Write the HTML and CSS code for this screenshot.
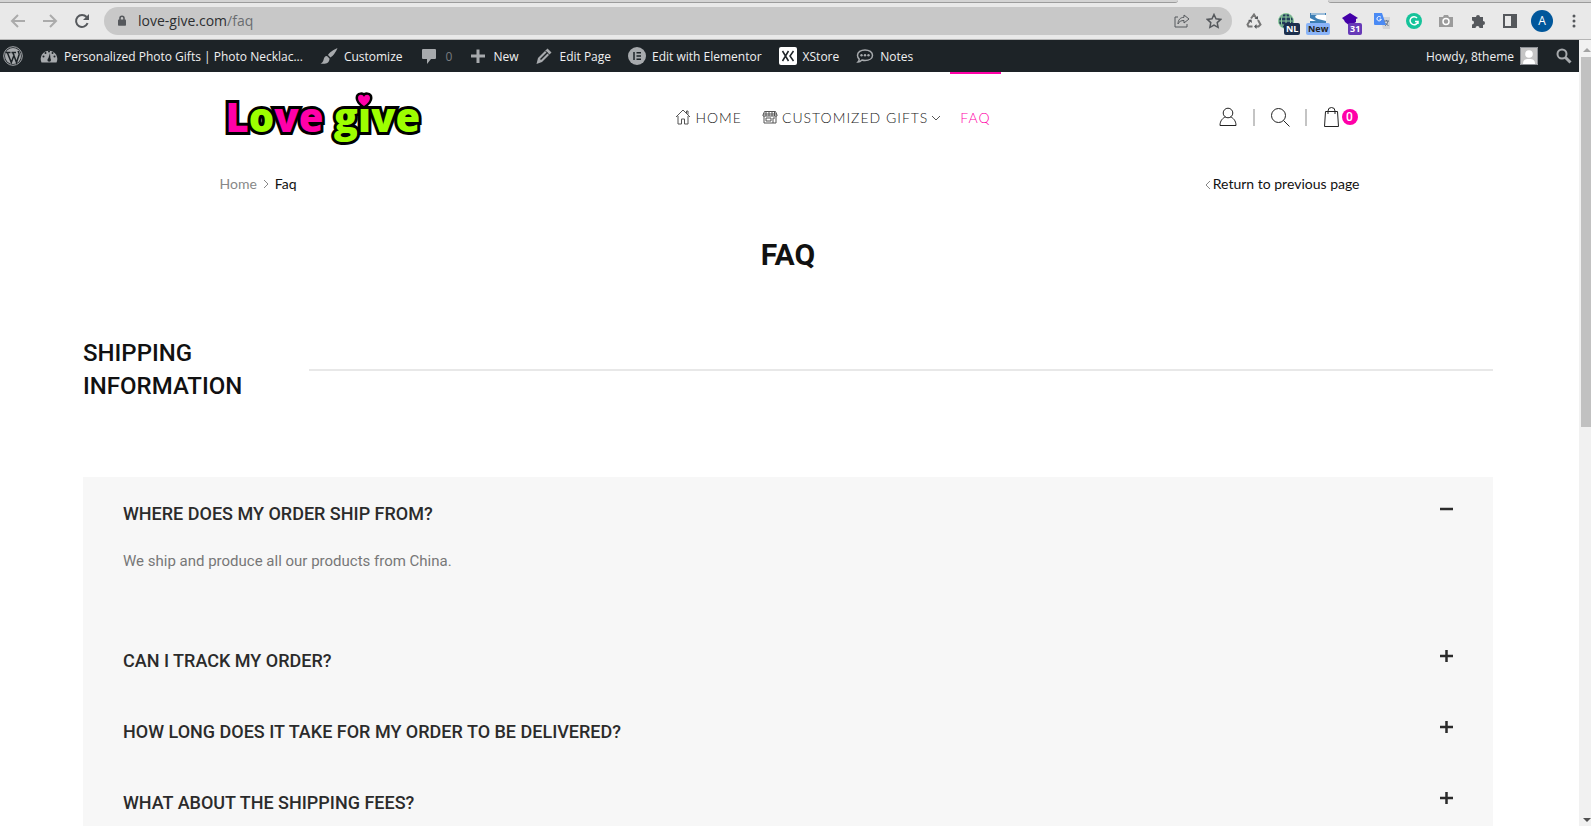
FILE: index.html
```
<!DOCTYPE html>
<html lang="en">
<head>
    <meta charset="UTF-8">
    <meta name="viewport" content="width=device-width, initial-scale=1.0">
    <title>Faq</title>
    <link rel="stylesheet" href="styles.css">
</head>
<body>
    <!-- Browser toolbar -->
    <div class="tab-strip"><span class="tab-edge"></span><span class="tab-active"></span><span class="tab-rest"></span></div>
    <div class="toolbar">
        <button class="tool" aria-label="Back"><svg class="i16 faded" viewBox="0 0 16 16"><path d="M15 8H2M8 2L2 8l6 6"/></svg></button>
        <button class="tool" aria-label="Forward"><svg class="i16 faded" viewBox="0 0 16 16"><path d="M1 8h13M8 2l6 6-6 6"/></svg></button>
        <button class="tool" aria-label="Reload"><svg class="i16" viewBox="0 0 16 16"><path d="M13.6 10.2A6 6 0 1 1 12.6 4" /><path class="solid" d="M15 1v6H9z"/></svg></button>
        <div class="address">
            <svg class="lock" viewBox="0 0 10 14"><rect class="solid" x="0" y="5" width="10" height="8" rx="1"/><path d="M2.500 6V3.500a2.500 2.500 0 0 1 5 0V6"/></svg>
            <a class="url" href="#">love-give.com<span>/faq</span></a>
            <button class="tool" aria-label="Share"><svg class="i16 thin" viewBox="0 0 16 16"><path d="M4 4H1v10h12v-3"/><path d="M10 2l5 4-5 4V7.500C7 7.500 5 8.500 4 11c0-4 2-6.500 6-6.700z"/></svg></button>
            <button class="tool" aria-label="Bookmark"><svg class="i16 star" viewBox="0 0 16 16"><path d="M8 1.500l2 4.300 4.700.6-3.500 3.200.9 4.700L8 12l-4.100 2.300.9-4.700-3.500-3.200 4.700-.6z"/></svg></button>
        </div>
        <div class="extensions">
            <button class="tool" aria-label="Recycle"><svg class="i16 recycle" viewBox="0 0 16 16"><path d="M5 5.500L8 1.500l2.500 4M12 7l2.500 4.500-2 2H9.500M6.500 13.500h-4l-1-2L4 7.500"/><path class="solid" d="M8.500 5.500l3.500 1V3zM10.500 11v5L8 13.500zM2 7l3.500-.5.5 3.500z"/></svg></button>
            <button class="tool" aria-label="Language"><svg class="i16 globe" viewBox="0 0 16 16"><circle cx="8" cy="8" r="7.500"/><path d="M8 1v14M1 8h14M2 4h12M2 12h12M4.500 1.500c-1.500 4-1.500 9 0 13M11.500 1.500c1.500 4 1.500 9 0 13"/></svg><span class="badge navy">NL</span></button>
            <button class="tool" aria-label="Screenshots"><svg class="i16" viewBox="0 0 16 16"><path d="M0 0h16v16H0z" fill="#fff" stroke="none"/><path d="M0 0h16v2H7c-3 1-2 3 1 4l8 2v8H0V8h6L0 5z" fill="#3e7fb5" stroke="none"/><path d="M1 1h14" stroke="#fff" stroke-width="1"/></svg><span class="badge blue">New</span></button>
            <button class="tool" aria-label="Layers"><svg class="i16" viewBox="0 0 16 16"><path d="M8 0l8 5-2 1v3l-6 4-5-4-1-2-2-2z" fill="#4400a8" stroke="none"/></svg><span class="badge purple">31</span></button>
            <button class="tool" aria-label="Translate"><svg class="i16" viewBox="0 0 16 16"><path d="M6 4h10v12H9z" fill="#d2d4d7" stroke="none"/><path d="M0 0h8l4 12H1a1 1 0 0 1-1-1z" fill="#4a8af4" stroke="none"/><path d="M7 4.500a2.200 2.200 0 1 0 .3 1.700H5.500" stroke="#fff" stroke-width="1"/><path d="M10 8h5M12.500 7v1M14 8c-.5 3-2 4-3 5M11.500 10l3 3" stroke="#64748b" stroke-width="1"/></svg></button>
            <button class="tool" aria-label="Grammar"><svg class="i16" viewBox="0 0 16 16"><circle cx="8" cy="8" r="8" fill="#15c39a" stroke="none"/><path d="M11 5a4 4 0 1 0 1 3.500H9M12 8.500V11" stroke="#fff" stroke-width="1.500"/></svg></button>
            <button class="tool" aria-label="Camera"><svg class="i16" viewBox="0 0 16 16"><path d="M1 4h4l1-2h4l1 2h4v10H1z" fill="#9b9b9b" stroke="none"/><circle cx="8" cy="8.500" r="3" stroke="#fff" stroke-width="1.500"/></svg></button>
            <button class="tool" aria-label="Extensions"><svg class="i16" viewBox="0 0 16 16"><path class="solid" d="M2 4h4a2 2 0 1 1 4 0h3v4a2 2 0 1 1 0 4v3H9.500a2 2 0 1 0-4 0H2v-3.500a2 2 0 1 0 0-4z"/></svg></button>
            <button class="tool" aria-label="Side panel"><svg class="i16" viewBox="0 0 16 16"><rect x="2" y="2" width="12" height="12"/><path class="solid" d="M9 1h6v14H9z"/></svg></button>
            <button class="tool" aria-label="Profile"><span class="profile">A</span></button>
            <button class="tool" aria-label="Menu"><svg class="i16" viewBox="0 0 16 16"><circle class="solid" cx="8" cy="3" r="1.500"/><circle class="solid" cx="8" cy="8" r="1.500"/><circle class="solid" cx="8" cy="13" r="1.500"/></svg></button>
        </div>
    </div>

    <div class="viewport">
        <div class="page">
            <!-- WordPress admin bar -->
            <div class="admin-bar">
                <a href="#" aria-label="WordPress"><svg class="i20" viewBox="0 0 20 20"><circle cx="10" cy="10" r="9.300" fill="none" stroke="#a7aaad" stroke-width="1"/><circle cx="10" cy="10" r="8"/><path d="M3 6.500h4.500M8.500 6.500H13M4.500 7l3.800 9.500 3-8M10 7l3.500 9.500L16 9c.6-2-.8-2.500-.8-4" fill="none" stroke="#1d2327" stroke-width="1.500"/></svg></a>
                <a href="#" class="site"><svg class="i18" viewBox="0 0 18 18"><path d="M1.500 15.500a8.300 8.300 0 1 1 15 0z"/><path d="M8 12.500L10 6l.5 6.500z" fill="#1d2327"/><g fill="#1d2327"><circle cx="9" cy="4.500" r="1"/><circle cx="5.500" cy="6" r="1"/><circle cx="12.500" cy="6" r="1"/><circle cx="3.500" cy="9.500" r="1"/><circle cx="14.500" cy="9.500" r="1"/><circle cx="9.200" cy="13" r="1.800"/></g></svg>Personalized Photo Gifts | Photo Necklac...</a>
                <a href="#"><svg class="i18" viewBox="0 0 18 18"><path d="M17.500 1c-4 1.500-8 4.500-9.500 7l2.500 2.500C13 9 16 5 17.500 1zM7 9c-2.500 0-3 2-3.500 4-.5 2-1.500 3-3 3.500 4 .8 9 .5 9-5z"/></svg>Customize</a>
                <a href="#" class="muted"><svg class="i18" viewBox="0 0 18 18"><path d="M3 2h12a1 1 0 0 1 1 1v8a1 1 0 0 1-1 1h-4l-4 5v-5H3a1 1 0 0 1-1-1V3a1 1 0 0 1 1-1z"/></svg>0</a>
                <a href="#"><svg class="i18" viewBox="0 0 18 18"><path d="M7.500 2.500h3v5h5.500v3h-5.500v5.500h-3v-5.500H2v-3h5.500z"/></svg>New</a>
                <a href="#"><svg class="i18" viewBox="0 0 18 18"><path d="M12.500 1.500l4 4L7 15l-5.500 2L3 11z"/><path d="M5.500 12.500l7-7" stroke="#1d2327" stroke-width="1.500" fill="none"/><path d="M10.500 4l4 4" stroke="#1d2327" fill="none"/></svg>Edit Page</a>
                <a href="#"><svg class="i18" viewBox="0 0 18 18"><circle cx="9" cy="9" r="9"/><path d="M6 5v8M8.500 5.700H13M8.500 9H13M8.500 12.300H13" stroke="#1d2327" stroke-width="1.500" fill="none"/></svg>Edit with Elementor</a>
                <a href="#"><svg class="i18" viewBox="0 0 18 18"><rect width="18" height="18" rx="2" fill="#fff"/><path d="M3.500 4l6 10M9.500 4l-6 10M14.500 4l-3.500 5 3.500 5" stroke="#1d2327" stroke-width="1.500" fill="none"/></svg>XStore</a>
                <a href="#"><svg class="i18" viewBox="0 0 18 18"><path d="M9 3c4.200 0 7.500 2.200 7.500 5.200S13.500 13.500 9 13.500c-1 0-2-.2-3-.5-1 1-2.500 2-4 2 1-1 1.300-2 1.200-3C2.200 11 1.500 9.700 1.500 8.200 1.500 5.200 4.800 3 9 3z" fill="none" stroke="#a7aaad" stroke-width="1.500"/><circle cx="5.500" cy="8.200" r="1.200"/><circle cx="9" cy="8.200" r="1.200"/><circle cx="12.500" cy="8.200" r="1.200"/></svg>Notes</a>
                <a href="#" class="howdy">Howdy, 8theme<svg class="i18" viewBox="0 0 18 18"><rect width="18" height="18" fill="#c5c5c5"/><path d="M.5.5h17v17H.5z" fill="none" stroke="#8c8f94"/><circle cx="9" cy="7" r="3.800" fill="#fff"/><path d="M3 17c0-4 2-5 6-5s6 1 6 5z" fill="#fff"/></svg></a>
                <button class="admin-search" aria-label="Search"><svg class="i18" viewBox="0 0 18 18"><circle cx="7" cy="7" r="4.500" fill="none" stroke="#a7aaad" stroke-width="2"/><path d="M10.500 10.500l5 5" stroke="#a7aaad" stroke-width="3"/></svg></button>
            </div>

            <header class="header container">
                <a class="logo" href="#" aria-label="Love give">
                    <span class="pink">L</span><span class="lime">o</span><span class="pink">ve</span>
                    <span class="lime">g</span><span class="lime dotless">ı<svg class="heart" viewBox="0 0 20 18"><path d="M10 15c-4-3-6-5-6-8 0-4 5-4 6-1 1-3 6-3 6 1 0 3-2 5-6 8z"/></svg></span><span class="lime">ve</span>
                </a>
                <nav class="menu">
                    <a href="#"><svg class="i16" viewBox="0 0 16 16"><path d="M1 8l7-7 7 7M3 7v8h3.500v-5h3v5H13V7M11.500 4V2h1.500v3.500"/></svg>HOME</a>
                    <a href="#"><svg class="i16" viewBox="0 0 16 16"><path d="M2.500 2.500h11L15 6v1H1V6zM2 7v7h12V7M1 5h14M4 3v4M7 3v4M10 3v4M12.500 3v4M4 9h5v3H4zM11 14V9h2"/></svg>CUSTOMIZED GIFTS<svg class="chevron" viewBox="0 0 8 8"><path d="M0 3l4 4 4-4"/></svg></a>
                    <a href="#" class="active">FAQ</a>
                </nav>
                <div class="actions">
                    <a href="#" aria-label="Account"><svg class="i20" viewBox="0 0 20 20"><circle cx="10" cy="6" r="4.800"/><path d="M7.500 10C5 10.800 2 13.500 2 18.500h16c0-5-3-7.700-5.500-8.500"/></svg></a>
                    <span class="separator"></span>
                    <button aria-label="Search"><svg class="i20" viewBox="0 0 20 20"><circle cx="8.500" cy="8.500" r="7"/><path d="M13.500 13.500l6 6"/></svg></button>
                    <span class="separator"></span>
                    <a href="#" class="cart" aria-label="Cart"><svg class="i20" viewBox="0 0 20 20"><path d="M3.500 4.500h12l1 15h-14zM6 7V4a3.500 3.500 0 0 1 7 0v3"/></svg><span class="count">0</span></a>
                </div>
            </header>

            <div class="breadcrumbs container">
                <div class="trail"><a href="#">Home</a><svg class="chevron" viewBox="0 0 8 8"><path d="M2 0l4 4-4 4"/></svg><span>Faq</span></div>
                <a class="return" href="#"><svg class="chevron" viewBox="0 0 8 8"><path d="M5 0L1 4l4 4"/></svg>Return to previous page</a>
            </div>

            <main class="content">
                <h1>FAQ</h1>
                <div class="section-title">
                    <h2>SHIPPING INFORMATION</h2>
                    <hr>
                </div>
                <div class="accordion">
                    <h3><button aria-expanded="true">WHERE DOES MY ORDER SHIP FROM?<svg class="sign" viewBox="0 0 14 14"><path d="M1 7h13"/></svg></button></h3>
                    <div class="answer"><p>We ship and produce all our products from China.</p></div>
                    <h3><button aria-expanded="false">CAN I TRACK MY ORDER?<svg class="sign" viewBox="0 0 14 14"><path d="M1 7h13M7.500 1v12"/></svg></button></h3>
                    <h3><button aria-expanded="false">HOW LONG DOES IT TAKE FOR MY ORDER TO BE DELIVERED?<svg class="sign" viewBox="0 0 14 14"><path d="M1 7h13M7.500 1v12"/></svg></button></h3>
                    <h3><button aria-expanded="false">WHAT ABOUT THE SHIPPING FEES?<svg class="sign" viewBox="0 0 14 14"><path d="M1 7h13M7.500 1v12"/></svg></button></h3>
                </div>
            </main>
        </div>
        <div class="scrollbar">
            <svg viewBox="0 0 8 4"><path d="M0 4l4-4 4 4z" fill="#a3a3a3"/></svg>
            <div class="track"><div class="thumb"></div></div>
            <svg viewBox="0 0 8 4"><path d="M0 0l4 4 4-4z" fill="#505050"/></svg>
        </div>
    </div>
</body>
</html>
```
FILE: styles.css
```
* {
    box-sizing: border-box;
}

body {
    margin: 0;
    height: 100vh;
    display: flex;
    flex-direction: column;
    overflow: hidden;
    background: #fff;
    color: #111;
    font-family: Roboto, sans-serif;
}

a {
    color: inherit;
    text-decoration: none;
}

button {
    border: none;
    padding: 0;
    background: none;
    color: inherit;
    font: inherit;
    cursor: pointer;
}

svg {
    flex: none;
}

.i16 {
    width: 16px;
    height: 16px;
}

.i18 {
    width: 18px;
    height: 18px;
}

.i20 {
    width: 20px;
    height: 20px;
}

/* Browser toolbar */
.tab-strip {
    flex: none;
    display: flex;
    height: 3px;
    background: #e9e9e9;
}

.tab-edge {
    flex: 1;
    background: #d4d4d4;
    border-bottom: 1px solid #9c9c9c;
    border-bottom-right-radius: 3px;
}

.tab-active {
    width: 150px;
}

.tab-rest {
    width: 263px;
    background: #d4d4d4;
    border-bottom: 1px solid #9c9c9c;
    border-bottom-left-radius: 3px;
}

.toolbar {
    flex: none;
    display: flex;
    align-items: center;
    height: 37px;
    padding: 0 1px 0 2px;
    background: #e9e9e9;
    border-bottom: 1px solid #b5b5b5;
    font-family: "Open Sans", sans-serif;
}

.tool {
    position: relative;
    width: 32px;
    height: 28px;
    display: flex;
    align-items: center;
    justify-content: center;
}

.tool svg {
    fill: none;
    stroke: #55585c;
    stroke-width: 2;
}

.tool .faded {
    stroke: #ababab;
}

.tool .thin {
    stroke-width: 1;
}

.tool .star {
    stroke-width: 1.5;
}

.tool .recycle {
    stroke: #777;
}

.tool .globe {
    fill: #23395b;
    stroke: #8fd19e;
    stroke-width: 1;
}

.solid {
    fill: #55585c;
    stroke: none;
}

.address {
    flex: 1;
    display: flex;
    align-items: center;
    height: 28px;
    margin-left: 6px;
    padding-left: 14px;
    padding-right: 2px;
    border-radius: 14px;
    background: #c8c8c8;
}

.lock {
    width: 8px;
    height: 14px;
    fill: none;
    stroke: #55585c;
    stroke-width: 2;
}

.url {
    flex: 1;
    margin-left: 12px;
    font-size: 14px;
    line-height: 18px;
    color: #2d2f31;
}

.url span {
    color: #6a6d70;
}

.extensions {
    display: flex;
    margin-left: 6px;
}

.badge {
    position: absolute;
    left: 14px;
    bottom: 0;
    padding: 0 2px;
    border-radius: 2px;
    color: #fff;
    font-size: 9px;
    font-weight: 700;
    line-height: 12px;
}

.navy {
    background: #1c2f4d;
}

.blue {
    left: 4px;
    background: #8ab4f8;
    color: #222;
}

.purple {
    background: #673ab7;
}

.profile {
    width: 22px;
    height: 22px;
    border-radius: 50%;
    background: #01579b;
    color: #fff;
    font-size: 12px;
    line-height: 22px;
}

.viewport {
    flex: 1;
    display: flex;
    min-height: 0;
}

.page {
    flex: 1;
    overflow: hidden;
}

/* Scrollbar */
.scrollbar {
    width: 12px;
    display: flex;
    flex-direction: column;
    align-items: flex-end;
    padding: 8px 0 4px;
    background: #f1f1f1;
}

.scrollbar svg {
    width: 8px;
    height: 4px;
}

.track {
    flex: 1;
    width: 10px;
    padding: 5px 0;
}

.thumb {
    height: 49%;
    background: #c1c1c1;
}

/* Admin bar */
.admin-bar {
    display: flex;
    align-items: center;
    gap: 17px;
    height: 32px;
    padding: 0 6px 0 3px;
    background: #1d2327;
    color: #f0f0f1;
    font-family: "Open Sans", sans-serif;
    font-size: 12px;
}

.admin-bar a {
    display: flex;
    align-items: center;
    gap: 6px;
    white-space: nowrap;
}

.admin-bar svg {
    fill: #a7aaad;
}

.admin-bar .muted {
    gap: 8px;
    color: #787c80;
}

.admin-bar .howdy {
    margin-left: auto;
}

.admin-search {
    display: flex;
}

/* Header */
.container {
    max-width: 1140px;
    margin: 0 auto;
}

.header {
    display: grid;
    grid-template-columns: 3fr 7fr 2fr;
    align-items: center;
    height: 90px;
}

.logo {
    padding-left: 6px;
    font-family: "Open Sans", sans-serif;
    font-size: 40px;
    font-weight: 800;
    line-height: 60px;
    white-space: nowrap;
    -webkit-text-stroke: 6px #000;
    paint-order: stroke fill;
}

.pink {
    color: #ff00a8;
}

.lime {
    color: #9dff00;
}

.dotless {
    position: relative;
}

.heart {
    position: absolute;
    top: 2px;
    left: -4px;
    width: 20px;
    height: 18px;
    fill: #ff00a8;
    stroke: #000;
    stroke-width: 5px;
    paint-order: stroke;
}

.menu {
    display: flex;
    justify-content: center;
    height: 90px;
    padding-right: 8px;
}

.menu a {
    display: flex;
    align-items: center;
    gap: 4px;
    padding: 0 10px;
    border-top: 2px solid transparent;
    border-bottom: 2px solid transparent;
    color: #222;
    font-family: Lato, sans-serif;
    font-size: 14px;
    font-weight: 300;
    letter-spacing: 1px;
}

.menu .active {
    border-top-color: #ff00a8;
    color: #ff00a8;
}

.menu svg {
    fill: none;
    stroke: #555;
    stroke-width: 1;
}

.chevron {
    width: 8px;
    height: 8px;
    fill: none;
    stroke: #888;
    stroke-width: 1;
}

.actions {
    display: flex;
    align-items: center;
    justify-content: flex-end;
    gap: 15px;
    padding-right: 2px;
}

.actions svg {
    display: block;
    fill: none;
    stroke: #222;
    stroke-width: 1;
}

.separator {
    width: 2px;
    height: 17px;
    background: #c4c4c4;
}

.cart {
    display: flex;
    align-items: center;
}

.count {
    width: 16px;
    height: 16px;
    border-radius: 50%;
    background: #ff00a8;
    color: #fff;
    font-size: 12px;
    font-weight: 500;
    line-height: 16px;
    text-align: center;
}

.breadcrumbs {
    display: flex;
    justify-content: space-between;
    padding-top: 12px;
    font-family: Lato, sans-serif;
    font-size: 14px;
    line-height: 20px;
}

.trail {
    display: flex;
    align-items: center;
    gap: 5px;
}

.trail a {
    color: #888;
}

/* FAQ content */
.content {
    margin: 0 86px 0 83px;
}

h1 {
    margin: 40px 0 0;
    font-size: 30px;
    font-weight: 700;
    line-height: 42px;
    text-align: center;
}

.section-title {
    display: flex;
    align-items: center;
    margin-top: 61px;
}

h2 {
    width: 16%;
    margin: 0;
    padding-right: 40px;
    font-size: 24px;
    font-weight: 500;
    line-height: 33px;
}

hr {
    flex: 1;
    margin: 0;
    border: none;
    border-top: 2px solid #e8e8e8;
}

.accordion {
    margin-top: 74px;
    padding-bottom: 60px;
    background: #f7f7f7;
}

h3 {
    margin: 0;
}

h3 button {
    display: flex;
    align-items: flex-start;
    justify-content: space-between;
    width: 100%;
    padding: 25px 40px 23px;
    color: #2b2b2b;
    font-size: 18px;
    font-weight: 500;
    line-height: 23px;
    text-align: left;
}

.sign {
    width: 14px;
    height: 14px;
    stroke: #2b2b2b;
    stroke-width: 2.5;
}

.answer {
    padding: 1px 40px 50px;
    color: #777;
    font-size: 15px;
    line-height: 25px;
}

.answer p {
    margin: 0;
}
```
